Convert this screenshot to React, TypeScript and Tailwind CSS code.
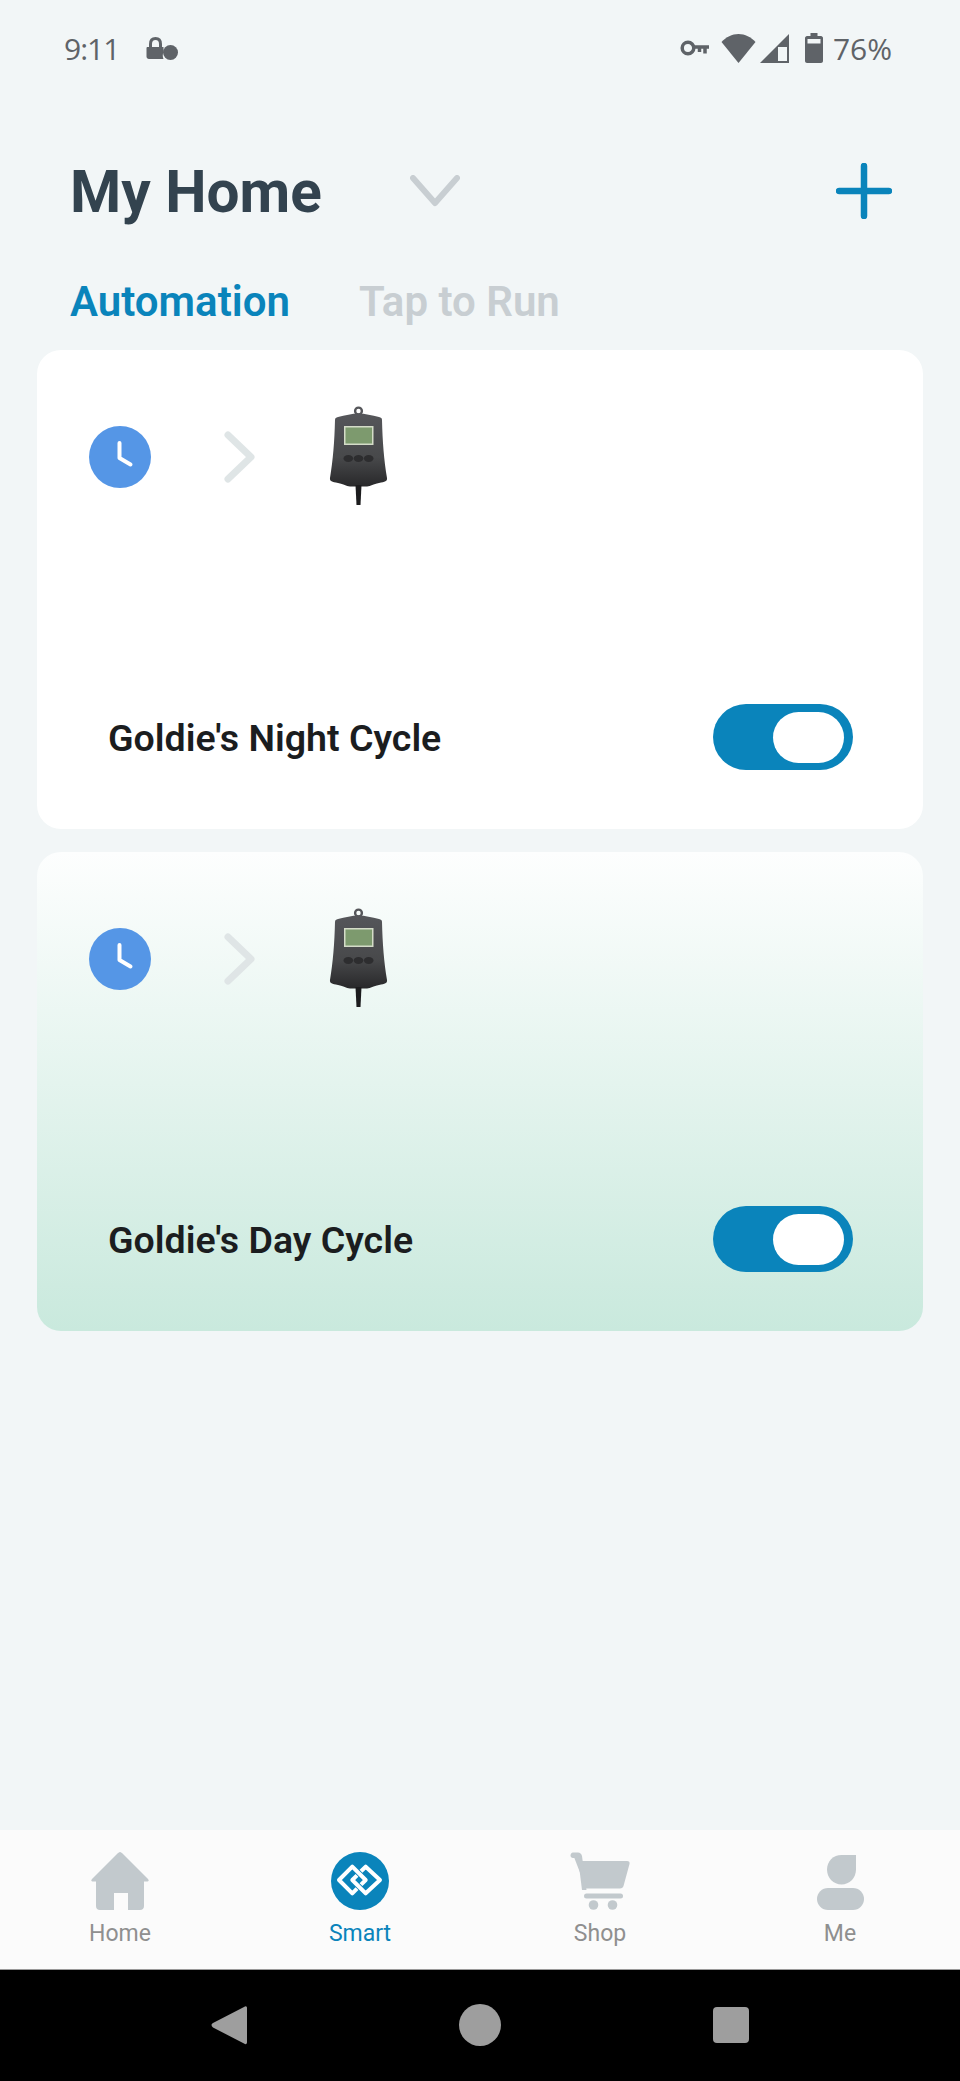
import React from 'react';

const sans = { fontFamily: 'Roboto, sans-serif' };

const ClockIcon = () => (
  <svg width="62" height="62" viewBox="0 0 62 62">
    <circle cx="31" cy="31" r="31" fill="#5596e6" />
    <path d="M30.500 17V32L41.500 38.500" fill="none" stroke="#fff" strokeWidth="4" strokeLinecap="round" strokeLinejoin="round" />
  </svg>
);

const DeviceIcon = ({ id }: { id: string }) => (
  <svg width="60" height="100" viewBox="0 0 60 100">
    <defs>
      <linearGradient id={id} x1="0" y1="0" x2="0" y2="1">
        <stop offset="0" stopColor="#55565a" />
        <stop offset="0.6" stopColor="#48494b" />
        <stop offset="1" stopColor="#28282a" />
      </linearGradient>
    </defs>
    <circle cx="29.500" cy="5" r="3.400" fill="none" stroke="#55565a" strokeWidth="2.400" />
    <path d="M6 14C6 12 7 11.500 9 11C16 9.500 23 7.500 29.500 7.500S43 9.500 50 11C52 11.500 53 12 53 14C53.500 36 55 54 58 72C58.500 75 56 76 50 77C44 78 42 80 38 80.500H21C17 80 15 78 9 77C3 76 0.500 75 1 72C4 54 5.500 36 6 14Z" fill={`url(#${id})`} />
    <rect x="15" y="20" width="29.500" height="19" fill="#d4dcc8" />
    <rect x="16.500" y="21.500" width="26.500" height="16" fill="#7d9a6e" />
    <ellipse cx="19.300" cy="52.500" rx="4.800" ry="3.400" fill="#2d2d2f" />
    <ellipse cx="29.500" cy="52.500" rx="4.800" ry="3.400" fill="#2d2d2f" />
    <ellipse cx="39.700" cy="52.500" rx="4.800" ry="3.400" fill="#2d2d2f" />
    <path d="M26.500 79H32.500L31.500 99H27.500Z" fill="#1c1c1e" />
  </svg>
);

const Toggle = () => (
  <div className="flex justify-end items-center pr-[9px] w-[140px] h-[66px] bg-[#0a84bb] rounded-full">
    <div className="w-[71px] h-[51px] bg-white rounded-full" />
  </div>
);

const AutomationCard = ({ id, title, className }: { id: string; title: string; className: string }) => (
  <div className={`flex flex-col h-[479px] rounded-[24px] ${className}`}>
    <div className="flex items-center pt-[57px] pl-[52px]">
      <ClockIcon />
      <svg className="ml-[72px]" width="34" height="52" viewBox="0 0 34 52">
        <path d="M5 4L28 26L5 48" fill="none" stroke="#dfe5e6" strokeWidth="7" strokeLinecap="round" strokeLinejoin="round" />
      </svg>
      <div className="ml-[72px] -mt-[1px]">
        <DeviceIcon id={id} />
      </div>
    </div>
    <div className="flex justify-between items-center mt-auto mb-[59px] pr-[70px] pl-[71px]">
      <span className="mt-[2px] text-[37.500px] font-semibold text-[#1b1d1f]" style={sans}>{title}</span>
      <Toggle />
    </div>
  </div>
);

const StatusBar = () => (
  <div className="flex justify-between items-center pr-[68px] pl-[64px] pb-[2px] h-[98px] text-[#5f6368]">
    <div className="flex items-center">
      <span className="text-[30px] tracking-[-1px]" style={{ fontFamily: '"Open Sans", sans-serif' }}>9:11</span>
      <svg className="ml-[27px] mt-[1px]" width="33" height="26" viewBox="0 0 33 26" fill="#5f6368">
        <path d="M4.500 12V8C4.500 4.500 6.500 2.500 9.500 2.500S14.500 4.500 14.500 8V12" fill="none" stroke="#5f6368" strokeWidth="3" />
        <path d="M1.500 11H17.500V16C16.500 18 16.500 21 17.500 23H3C1.500 23 0.500 22 0.500 20.500V12C0.500 11.500 1 11 1.500 11Z" />
        <circle cx="24.500" cy="16.500" r="7.500" />
      </svg>
    </div>
    <div className="flex items-center">
      <svg width="30" height="16" viewBox="0 0 30 16" fill="none" stroke="#5f6368" strokeWidth="3.500">
        <circle cx="8" cy="8" r="5.800" />
        <path d="M14 7H29M25 7V13.500M19.500 7V12" />
      </svg>
      <svg className="ml-[11px]" width="35" height="30" viewBox="0 0 35 30" fill="#5f6368">
        <path d="M0.500 9C5 4 11 1 17.500 1S30 4 34.500 9L17.500 30Z" />
      </svg>
      <svg className="ml-[4px]" width="29" height="29" viewBox="0 0 29 29">
        <path d="M29 0V29H0Z" fill="#5f6368" />
        <path d="M18 13H27V27H18Z" fill="#f2f6f7" />
      </svg>
      <svg className="ml-[16px]" width="18" height="30" viewBox="0 0 18 30">
        <path d="M5.500 0H12.500V3H16C17 3 18 4 18 5V28C18 29 17 30 16 30H2C1 30 0 29 0 28V5C0 4 1 3 2 3H5.500Z" fill="#5f6368" />
        <rect x="2.500" y="6" width="13" height="4.500" fill="#f2f6f7" />
      </svg>
      <span className="ml-[10px] text-[30px]" style={{ fontFamily: '"Open Sans", sans-serif' }}>76%</span>
    </div>
  </div>
);

const HomeIcon = () => (
  <svg width="60" height="58" viewBox="0 0 60 58" fill="#c2c9cd">
    <path d="M30 0C31 0 32 1 33 2L58 27C59.500 29 58.500 29.500 56 29.500H54V54C54 56.500 52.500 58 50 58H38V41H24V58H10C7.500 58 6 56.500 6 54V29.500H4C1.500 29.500 0.500 29 2 27L27 2C28 1 29 0 30 0Z" />
  </svg>
);

const SmartIcon = () => (
  <svg width="58" height="58" viewBox="0 0 58 58">
    <circle cx="29" cy="29" r="29" fill="#0a84bb" />
    <g fill="none" stroke="#fff" strokeWidth="4" strokeLinejoin="round">
      <path d="M26 36.600L21.300 41.300L8 28L21.300 14.700L34.700 28L30 32.700" />
      <path d="M30 19.300L34.700 14.700L49 28L34.700 41.300L21.300 28L26 23.300" />
    </g>
  </svg>
);

const ShopIcon = () => (
  <svg width="60" height="60" viewBox="0 0 60 60" fill="#c2c9cd">
    <path d="M3 2.500H8C9.500 2.500 10.500 3.500 10.800 5L11.500 9H57C59 9 60 10 59.500 12L53.500 34C53 35.500 52 36.500 50 36.500H16V36Z" />
    <path d="M3 0.500H8C10 0.500 11.500 2 12 4L16.500 38L12 38L8 6H3C1.500 6 0.500 5 0.500 3.500S1.500 0.500 3 0.500Z" />
    <rect x="14" y="41.500" width="39" height="5" rx="2.500" />
    <circle cx="23.500" cy="53" r="4.800" />
    <circle cx="42.500" cy="53" r="4.800" />
  </svg>
);

const MeIcon = () => (
  <svg width="60" height="60" viewBox="0 0 60 60" fill="#c2c9cd">
    <path d="M46 3V17.500C46 26 39.500 32.500 31.500 32.500S17 26 17 17.500C17 9 23.500 3 31.500 3Z" />
    <rect x="7" y="36" width="47" height="22" rx="11" />
  </svg>
);

const NavItem = ({ label, active, children }: { label: string; active?: boolean; children: React.ReactNode }) => (
  <div className="flex flex-col items-center">
    <div className="flex justify-center items-start h-[60px]">{children}</div>
    <span className={`mt-[8px] text-[23px] leading-[28px] ${active ? 'text-[#0a84bb]' : 'text-[#8f8f8f]'}`} style={sans}>
      {label}
    </span>
  </div>
);

export default function App() {
  return (
    <div className="flex flex-col w-[960px] h-[2081px] bg-[#f2f6f7]" style={sans}>
      <StatusBar />

      {/* Header */}
      <div className="flex justify-between items-center mt-[58px] pr-[68px] pl-[70px] h-[74px]">
        <div className="flex items-center">
          <h1 className="text-[58.500px] font-bold text-[#33434f]" style={sans}>My Home</h1>
          <svg className="ml-[88px] -mt-[4px]" width="50" height="32" viewBox="0 0 50 32">
            <path d="M3 3L25 28L47 3" fill="none" stroke="#c8ced2" strokeWidth="6" strokeLinecap="round" strokeLinejoin="round" />
          </svg>
        </div>
        <svg className="-mt-[5px]" width="56" height="56" viewBox="0 0 56 56">
          <path d="M28 3V53M3 28H53" fill="none" stroke="#0a84bb" strokeWidth="6.500" strokeLinecap="round" />
        </svg>
      </div>

      {/* Tabs */}
      <div className="flex items-center gap-[69px] mt-[47px] pl-[70px] text-[42px] leading-[50px] font-semibold">
        <span className="text-[#0a84bb]">Automation</span>
        <span className="text-[#c8ced2]">Tap to Run</span>
      </div>

      {/* Cards */}
      <div className="flex flex-col gap-[23px] mt-[23px] px-[37px]">
        <AutomationCard id="device-a" title="Goldie's Night Cycle" className="bg-white" />
        <AutomationCard id="device-b" title="Goldie's Day Cycle" className="bg-gradient-to-b from-[#fdfefe] to-[#c9e9dd]" />
      </div>

      {/* Bottom nav */}
      <div className="grid grid-cols-4 mt-auto pt-[22px] h-[140px] bg-[#fbfbfb] border-b border-[#9a9a9a]">
        <NavItem label="Home"><HomeIcon /></NavItem>
        <NavItem label="Smart" active><SmartIcon /></NavItem>
        <NavItem label="Shop"><ShopIcon /></NavItem>
        <NavItem label="Me"><MeIcon /></NavItem>
      </div>

      {/* Android nav */}
      <div className="flex justify-center items-center gap-[212px] pb-[1px] h-[111px] bg-black">
        <svg width="36" height="40" viewBox="0 0 36 40">
          <path d="M33 2C35 0.500 36 1.500 36 3V37C36 39 35 40 33 38.500L2 22.500C0 21 0 19 2 18Z" fill="#9e9e9e" />
        </svg>
        <div className="w-[42px] h-[42px] bg-[#9e9e9e] rounded-full" />
        <div className="w-[36px] h-[36px] bg-[#9e9e9e] rounded-[4px]" />
      </div>
    </div>
  );
}
